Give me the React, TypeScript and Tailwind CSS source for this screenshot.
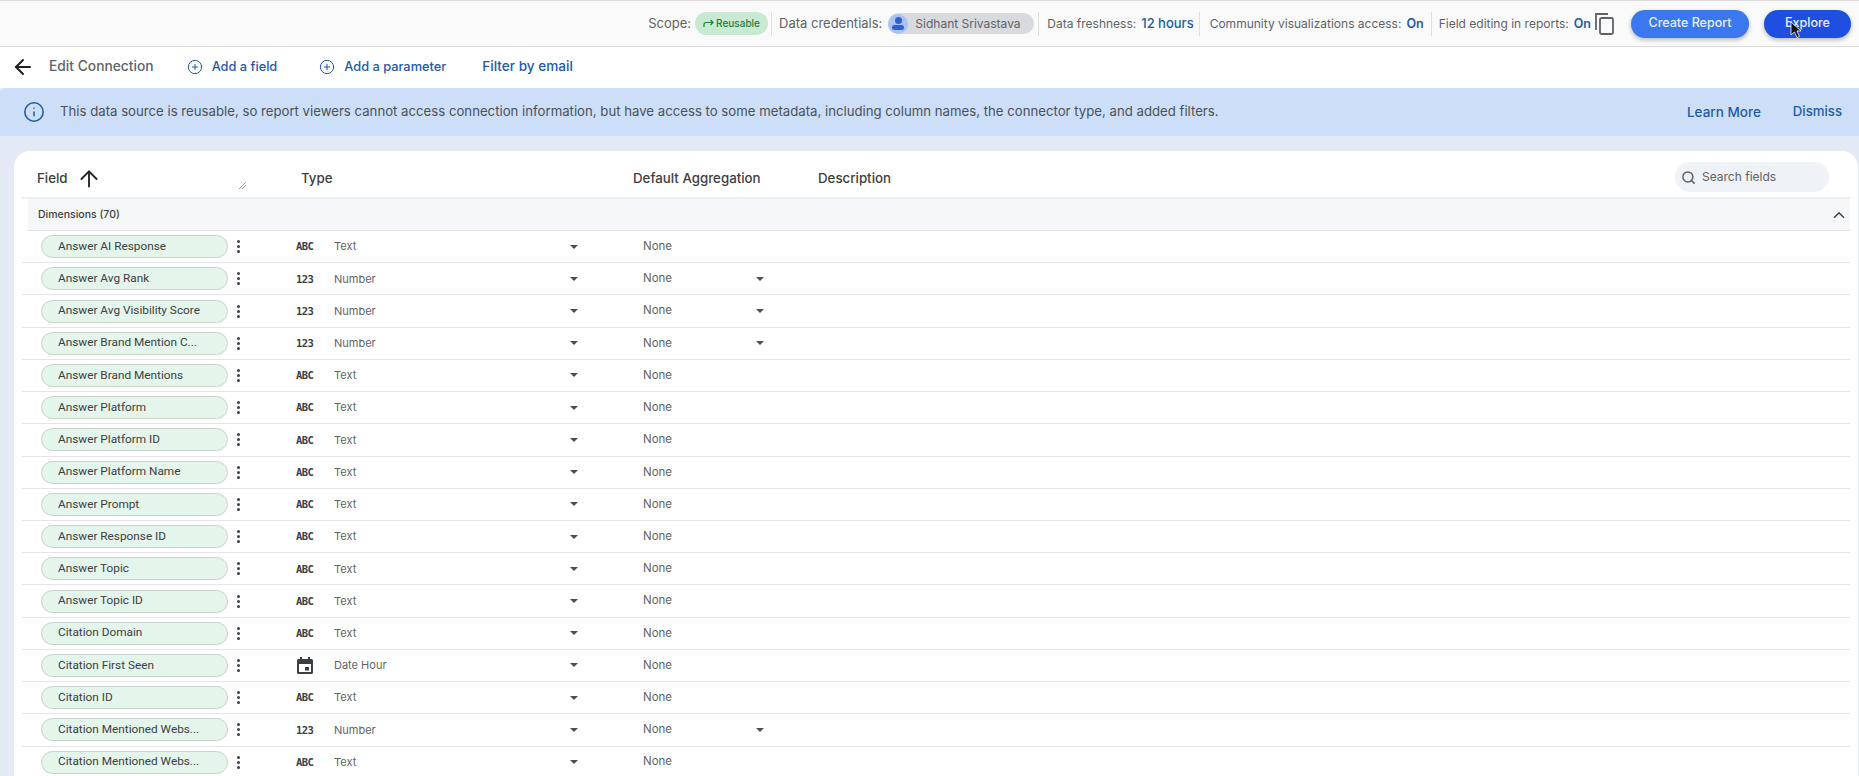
import { ArrowLeft, ArrowUp, ChevronUp, CirclePlus, Info, Search } from "lucide-react";

type Field = { name: string; kind: "text" | "number" | "date"; agg?: boolean };

const fields: Field[] = [
  { name: "Answer AI Response", kind: "text" },
  { name: "Answer Avg Rank", kind: "number", agg: true },
  { name: "Answer Avg Visibility Score", kind: "number", agg: true },
  { name: "Answer Brand Mention C...", kind: "number", agg: true },
  { name: "Answer Brand Mentions", kind: "text" },
  { name: "Answer Platform", kind: "text" },
  { name: "Answer Platform ID", kind: "text" },
  { name: "Answer Platform Name", kind: "text" },
  { name: "Answer Prompt", kind: "text" },
  { name: "Answer Response ID", kind: "text" },
  { name: "Answer Topic", kind: "text" },
  { name: "Answer Topic ID", kind: "text" },
  { name: "Citation Domain", kind: "text" },
  { name: "Citation First Seen", kind: "date" },
  { name: "Citation ID", kind: "text" },
  { name: "Citation Mentioned Webs...", kind: "number", agg: true },
  { name: "Citation Mentioned Webs...", kind: "text" },
];

function Caret() {
  return <span className="block h-0 w-0 border-x-[4px] border-t-[4px] border-x-transparent border-t-[#4a4d51]" />;
}

function Divider() {
  return <span className="block h-[24px] w-px bg-[#e0e0e0]" />;
}

function Kebab() {
  return (
    <span className="flex w-[4px] flex-col gap-[2px]">
      <span className="h-[3px] w-[3px] rounded-full bg-[#3c4043]" />
      <span className="h-[3px] w-[3px] rounded-full bg-[#3c4043]" />
      <span className="h-[3px] w-[3px] rounded-full bg-[#3c4043]" />
    </span>
  );
}

function TypeIcon({ kind }: { kind: Field["kind"] }) {
  if (kind === "date") {
    return (
      <svg width="18" height="19" viewBox="0 0 18 19" className="block">
        <path
          fill="#3c4043"
          d="M4 1h2v2h6V1h2v2h1.500A1.500 1.500 0 0 1 17 4.500v12a1.500 1.500 0 0 1-1.500 1.500h-13A1.500 1.500 0 0 1 1 16.500v-12A1.500 1.500 0 0 1 2.500 3H4V1zM3 8v8h12V8H3z"
        />
        <rect x="9" y="11" width="4" height="3.500" fill="#3c4043" />
      </svg>
    );
  }
  return (
    <span className="block font-['DejaVu_Sans_Mono',monospace] text-[10.500px] font-bold leading-none tracking-[-0.6px] text-[#3c4043]">
      {kind === "text" ? "ABC" : "123"}
    </span>
  );
}

function Row({ field }: { field: Field }) {
  return (
    <div className="flex h-[32.23px] items-center border-b border-[#e3e5e8] pl-[19px]">
      <div className="flex h-[23px] w-[187px] items-center rounded-full border border-[#c9d3cd] bg-[#e4f5eb] pl-[16px] font-['Roboto',sans-serif] text-[11.800px] text-[#3c4043]">
        {field.name}
      </div>
      <div className="ml-[9px] w-[59px]">
        <Kebab />
      </div>
      <div className="w-[38px]">
        <TypeIcon kind={field.kind} />
      </div>
      <div className="w-[236px] text-[11px] text-[#5f6368]">
        {field.kind === "text" ? "Text" : field.kind === "number" ? "Number" : "Date Hour"}
      </div>
      <Caret />
      <div className="ml-[65px] w-[113px] text-[11.500px] text-[#5f6368]">None</div>
      {field.agg && <Caret />}
    </div>
  );
}

export default function App() {
  return (
    <div className="h-[776px] overflow-hidden bg-[#e4eaf5] font-['Inter',sans-serif]">
      <header className="flex h-[47px] items-center justify-end border-y border-[#dcdcdc] bg-[#fafafa] pr-[8px] text-[#5f6368]">
        <span className="text-[13px]">Scope:</span>
        <span className="ml-[4px] flex h-[23px] w-[73px] items-center justify-center gap-[2px] rounded-full bg-[#c8ead3] text-[10px] font-medium text-[#1e7e45]">
          <svg width="11" height="9" viewBox="0 0 11 9" fill="none" stroke="#1e7e45" strokeWidth="1.200">
            <path d="M1 8V5.500A2 2 0 0 1 3 3.500H10M7.500 1L10 3.500 7.500 6" />
          </svg>
          Reusable
        </span>
        <span className="ml-[3px]"><Divider /></span>
        <span className="ml-[7px] text-[13px]">Data credentials:</span>
        <span className="ml-[6px] flex h-[21px] w-[146px] items-center rounded-full bg-[#d8dade] text-[12px]">
          <span className="flex h-[20px] w-[20px] flex-col items-center justify-center rounded-full bg-[#a8c2f5]">
            <span className="h-[7px] w-[7px] rounded-full bg-[#2f5fd0]" />
            <span className="mt-[1px] h-[5px] w-[12px] rounded-full bg-[#2f5fd0]" />
          </span>
          <span className="ml-[7px]">Sidhant Srivastava</span>
        </span>
        <span className="ml-[4px]"><Divider /></span>
        <span className="ml-[8px] text-[12px]">Data freshness:</span>
        <span className="ml-[5px] text-[13px] font-medium text-[#1f5aa8]">12 hours</span>
        <span className="ml-[5px]"><Divider /></span>
        <span className="ml-[10px] text-[12px]">Community visualizations access:</span>
        <span className="ml-[5px] mt-[2px] text-[12.500px] font-semibold text-[#1f5aa8]">On</span>
        <span className="ml-[7px]"><Divider /></span>
        <span className="ml-[7px] text-[12px]">Field editing in reports:</span>
        <span className="ml-[5px] mt-[2px] text-[12.500px] font-semibold text-[#1f5aa8]">On</span>
        <svg width="21" height="24" viewBox="0 0 21 24" fill="none" stroke="#5f6368" strokeWidth="1.800" className="ml-[3px]">
          <path d="M2 18V2h12" />
          <rect x="6" y="6" width="13" height="16" rx="1.500" />
        </svg>
        <button className="ml-[16px] h-[28px] w-[118px] rounded-full bg-[#3b78f0] text-[12.500px] font-medium text-[#e8f0fe] shadow-[0_2px_4px_rgba(60,64,67,0.35)]">
          Create Report
        </button>
        <button className="relative ml-[15px] h-[28px] w-[87px] rounded-full bg-[#1f4fe0] text-[12.500px] font-medium text-[#e8f0fe] shadow-[0_2px_4px_rgba(60,64,67,0.35)]">
          Explore
          <svg width="12" height="18" viewBox="0 0 12 18" className="absolute left-[26px] top-[11px]">
            <path d="M1 1v13l3.500-3 2.500 5.500 2.500-1-2.500-5.500H11z" fill="#111" stroke="#fff" strokeWidth="0.800" />
          </svg>
        </button>
      </header>

      <div className="flex h-[41px] items-center bg-white pb-[2px] pl-[11px] text-[13px]">
        <ArrowLeft size={24} strokeWidth={2} className="text-[#202124]" />
        <span className="ml-[14px] text-[13.800px] font-medium text-[#5f6368]">Edit Connection</span>
        <CirclePlus size={16} strokeWidth={1.500} className="ml-[33px] text-[#1f5aa8]" />
        <span className="ml-[9px] text-[12.800px] font-medium text-[#1f5aa8]">Add a field</span>
        <CirclePlus size={16} strokeWidth={1.500} className="ml-[42px] text-[#1f5aa8]" />
        <span className="ml-[9px] text-[12.800px] font-medium text-[#1f5aa8]">Add a parameter</span>
        <span className="ml-[36px] text-[13.600px] font-medium text-[#1f5aa8]">Filter by email</span>
      </div>

      <div className="flex h-[48px] items-center rounded-tl-[6px] bg-[#cddff8] pl-[23px] pr-[17px] text-[13.200px] text-[#4a5058]">
        <Info size={22} strokeWidth={1.700} className="text-[#1f5aa8]" />
        <span className="ml-[15px]">
          This data source is reusable, so report viewers cannot access connection information, but have access to some metadata, including column names, the connector type, and added filters.
        </span>
        <span className="ml-auto text-[13.500px] font-medium text-[#1f5aa8]">Learn More</span>
        <span className="ml-[32px] font-medium text-[#1f5aa8]">Dismiss</span>
      </div>

      <main className="ml-[14px] mr-px mt-[15px] rounded-t-[16px] bg-white px-[8px]">
        <div className="flex h-[48px] items-center border-b-2 border-[#eceef0] pt-[6px] text-[13.300px] font-medium text-[#3c4043]">
          <div className="mt-[4px] flex items-center">
            <span className="ml-[15px] w-[39px]">Field</span>
            <ArrowUp size={26} strokeWidth={1.700} className="text-[#202124]" />
            <svg width="9" height="9" viewBox="0 0 9 9" stroke="#80868b" strokeWidth="0.800" className="ml-[136px] mt-[12px]">
              <path d="M1 8L8 1M4 8L8 4" />
            </svg>
            <span className="ml-[54px] w-[332px]">Type</span>
            <span className="w-[185px]">Default Aggregation</span>
            <span>Description</span>
          </div>
          <span className="ml-auto mr-[21px] flex h-[30px] w-[154px] items-center rounded-full bg-[#eff2f7] pl-[6px] text-[12px] font-normal text-[#5f6368]">
            <Search size={15} strokeWidth={2.400} className="text-[#5f6368]" />
            <span className="ml-[6px]">Search fields</span>
          </span>
        </div>
        <div className="ml-[6px] flex h-[32px] items-center justify-between border-b border-[#dfe1e5] bg-[#f6f7f9] pl-[10px] pr-[2px] text-[10.500px] font-medium text-[#3c4043]">
          Dimensions (70)
          <ChevronUp size={18} strokeWidth={2} className="text-[#3c4043]" />
        </div>
        {fields.map((field, i) => (
          <Row key={i} field={field} />
        ))}
      </main>
    </div>
  );
}
